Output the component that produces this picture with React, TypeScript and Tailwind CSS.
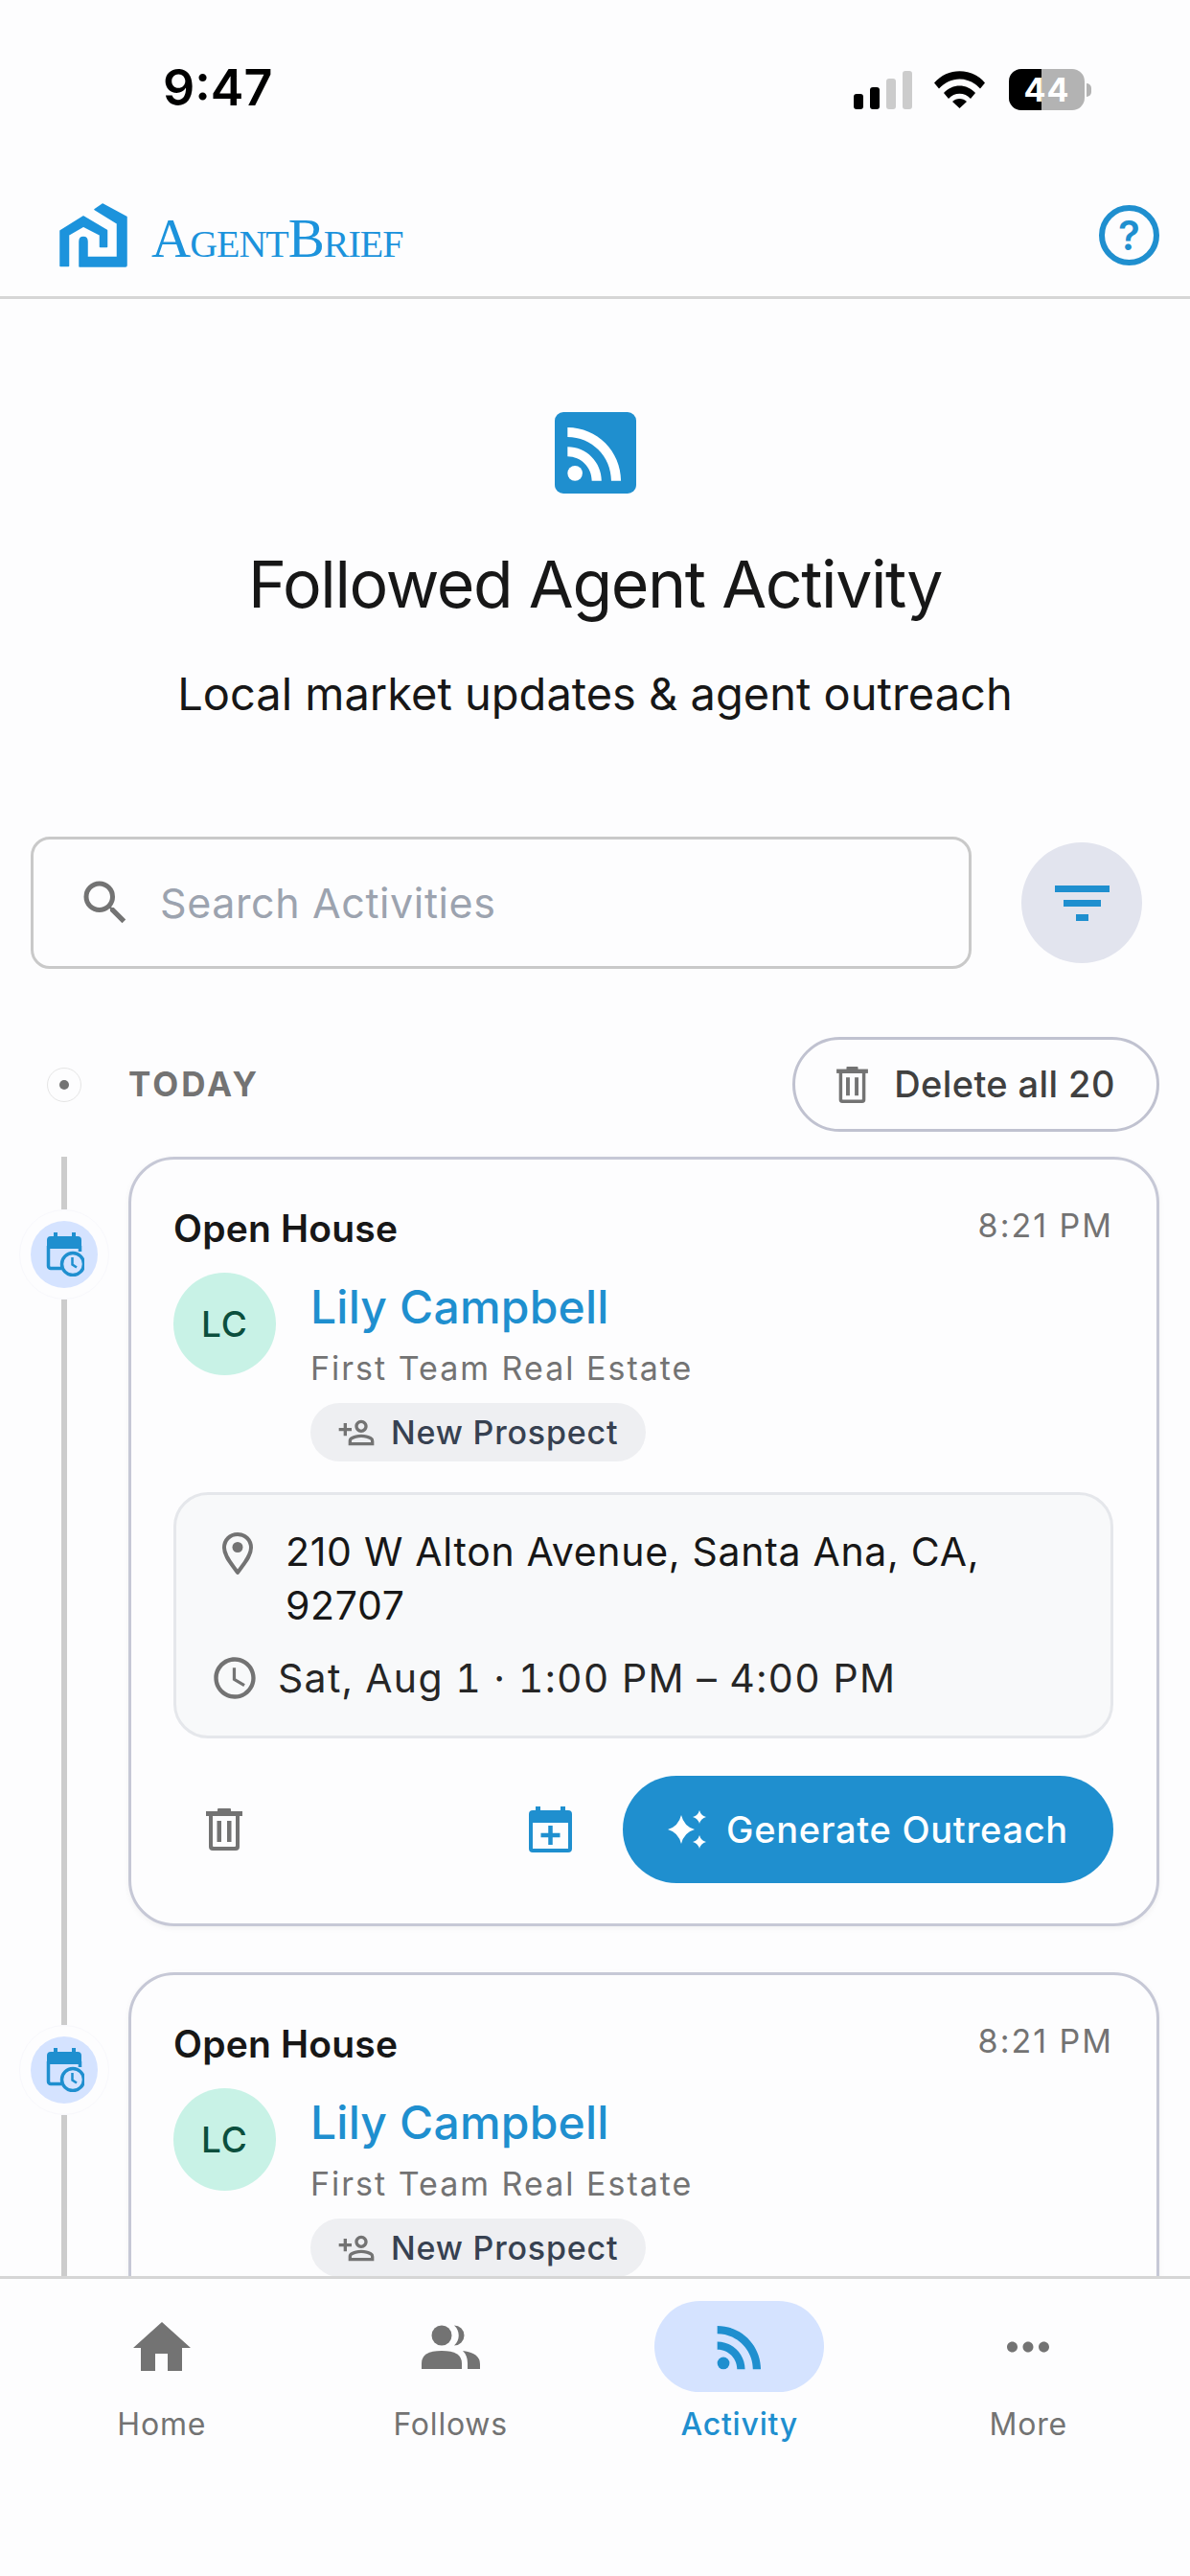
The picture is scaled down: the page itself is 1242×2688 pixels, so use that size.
import React from 'react';
import { MdMoreHoriz, MdRssFeed, MdSearch, MdOutlinePersonAddAlt, MdOutlineAccessTime } from 'react-icons/md';

function TrashIcon({ className }: { className?: string }) {
  return (
    <svg viewBox="0 0 38 44" className={className} fill="currentColor">
      <rect x="12" y="0" width="14" height="4" rx="1" />
      <rect x="0" y="3" width="38" height="5" />
      <path d="M3 7h32v33a4 4 0 0 1-4 4H7a4 4 0 0 1-4-4zm4 1v31a1 1 0 0 0 1 1h22a1 1 0 0 0 1-1V8z" fillRule="evenodd" />
      <rect x="11.500" y="13" width="4.500" height="22" />
      <rect x="22" y="13" width="4.500" height="22" />
    </svg>
  );
}

function CalendarClockIcon({ className }: { className?: string }) {
  return (
    <svg viewBox="0 0 40 46" className={className}>
      <path fill="currentColor" d="M8 0h4v4h15V0h4v4h2a4 4 0 0 1 4 4v9H1V8a4 4 0 0 1 4-4h3z" />
      <path fill="none" stroke="currentColor" strokeWidth="3.500" d="M2.500 14v21a2.500 2.500 0 0 0 2.500 2.500h11M35.500 14v6" />
      <circle cx="28" cy="33" r="11.500" fill="#d5e3ff" stroke="currentColor" strokeWidth="3.500" />
      <path fill="none" stroke="currentColor" strokeWidth="2.500" d="M27.500 26v7.500l4.500 3" />
    </svg>
  );
}

function CalendarPlusIcon({ className }: { className?: string }) {
  return (
    <svg viewBox="0 0 45 48" className={className}>
      <path fill="currentColor" d="M7 0h5v4h21V0h5v4h3a4 4 0 0 1 4 4v36a4 4 0 0 1-4 4H4a4 4 0 0 1-4-4V8a4 4 0 0 1 4-4h3z" />
      <rect x="4" y="17" width="37" height="27" fill="#fdfdfe" />
      <path fill="none" stroke="currentColor" strokeWidth="4.500" d="M22.500 20v20M12.500 30h20" />
    </svg>
  );
}

function SparkleIcon({ className }: { className?: string }) {
  return (
    <svg viewBox="0 0 40 40" className={className} fill="currentColor">
      <path d="M14 5Q17 17 28 20 17 23 14 35 11 23 0 20 11 17 14 5z" />
      <path d="M33 0Q34.500 5.500 40 7 34.500 8.500 33 14 31.500 8.500 26 7 31.500 5.500 33 0z" />
      <path d="M33 26Q34.500 31.500 40 33 34.500 34.500 33 40 31.500 34.500 26 33 31.500 31.500 33 26z" />
    </svg>
  );
}

function PinIcon({ className }: { className?: string }) {
  return (
    <svg viewBox="0 0 32 45" className={className}>
      <path fill="none" stroke="currentColor" strokeWidth="4" strokeLinejoin="round" d="M16 2C8 2 2 8 2 16c0 9 8 17 14 26 6-9 14-17 14-26 0-8-6-14-14-14z" />
      <circle cx="16" cy="15.500" r="5.500" fill="currentColor" />
    </svg>
  );
}

function HomeIcon({ className }: { className?: string }) {
  return (
    <svg viewBox="0 0 60 51" className={className} fill="currentColor">
      <path d="M30 0l30 27h-9v24H36V33H23v18H8V27H0z" />
    </svg>
  );
}

function FollowsIcon({ className }: { className?: string }) {
  return (
    <svg viewBox="0 0 61 46" className={className} fill="currentColor">
      <circle cx="21" cy="11" r="10.500" />
      <path d="M34 0.500A10.500 10.500 0 1 1 34 21.500 14 14 0 0 0 34 0.500z" />
      <path d="M0 46V40Q0 27 21 27 42 27 42 40V46z" />
      <path d="M43 27Q61 29 61 41V46H48V40Q48 32 43 27z" />
    </svg>
  );
}

function LogoMark() {
  return (
    <svg viewBox="0 0 71 67" className="h-[67px] w-[71px]">
      <g fill="#1c93dc" stroke="#1c93dc" strokeWidth="1.500" strokeLinejoin="round">
        <path d="M37 6.500L45 1 70 14.500V65Q70 66 69 66H21V40Q21 35.500 25 35.500 29 35.500 29 40V56.500H60.500V21z" />
        <path d="M1 29L25 14 49.500 28.500V45.500H42.500V33L25 24 9.500 33V65.500H1z" />
      </g>
    </svg>
  );
}

function StatusBar() {
  return (
    <div className="flex h-[186px] shrink-0 items-start justify-between pl-[170px] pr-[103px] pt-[62px]">
      <span className="text-[52px] font-semibold leading-[60px] text-black">9:47</span>
      <div className="mt-[10px] flex items-center">
        <svg viewBox="0 0 61 40" className="h-[40px] w-[61px]">
          <rect x="0" y="24" width="10" height="16" rx="3" fill="#000" />
          <rect x="17" y="17" width="10" height="23" rx="3" fill="#000" />
          <rect x="34" y="8" width="10" height="32" rx="3" fill="#cccccc" />
          <rect x="51" y="0" width="10" height="40" rx="3" fill="#cccccc" />
        </svg>
        <svg viewBox="0 0 53 39" className="ml-[23px] h-[39px] w-[53px]">
          <path d="M0 12.500C14-4 39-4 53 12.500l-5 6C36 5 17 5 5 18.500z" fill="#000" />
          <path d="M10 23c9-10 24-10 33 0l-5 6c-6-7-17-7-23 0z" fill="#000" />
          <path d="M19 32c4-4 11-4 15 0l-7.500 7z" fill="#000" />
        </svg>
        <div className="relative ml-[25px] h-[43px] w-[79px] overflow-hidden rounded-[13px] bg-[#b3b3b3]">
          <div className="h-full w-[34px] bg-black" />
          <span className="absolute inset-0 flex items-center justify-center text-[34px] font-bold leading-none tracking-[1px] text-white">44</span>
        </div>
        <div className="ml-[2px] h-[14px] w-[5px] rounded-r-full bg-[#b3b3b3]" />
      </div>
    </div>
  );
}

function AppHeader() {
  return (
    <div className="flex h-[126px] shrink-0 items-center justify-between border-b-[3px] border-[#d6d6d6] pb-[4px] pl-[62px] pr-[32px]">
      <div className="flex items-center gap-[25px]">
        <LogoMark />
        <span className="mt-[6px] text-[57px] leading-none tracking-[-1px] text-[#1c93dc] [font-family:'Liberation_Serif',serif] [font-variant:small-caps]">AgentBrief</span>
      </div>
      <div className="flex h-[63px] w-[63px] items-center justify-center rounded-full border-[6px] border-[#1f8fcf] text-[42px] font-semibold leading-none text-[#1f8fcf]">?</div>
    </div>
  );
}

// the second card runs under the tab bar, so only its top part is rendered
function ActivityCard({ cutOff = false }: { cutOff?: boolean }) {
  return (
    <div className="flex">
      <div className="flex w-[134px] shrink-0 flex-col items-center">
        <div className="h-[55px] w-[6px] bg-[#cccccc]" />
        <div className="flex h-[94px] w-[94px] shrink-0 items-center justify-center rounded-full border border-[#f8f8fc] bg-[#fdfdfe]">
          <div className="flex h-[70px] w-[70px] items-center justify-center rounded-full bg-[#d5e3ff] text-[#1f8fcf]">
            <CalendarClockIcon className="ml-[1px] h-[46px] w-[40px]" />
          </div>
        </div>
        <div className="w-[6px] flex-1 bg-[#cccccc]" />
      </div>
      <div className="mb-[48px] h-[803px] w-[1076px] rounded-[48px] border-[3px] border-[#c6c8d6] bg-[#fdfdfe] pl-[44px] pr-[45px] pt-[43px] shadow-[0_2px_6px_rgba(0,0,0,0.05)]">
        <div className="flex items-start justify-between">
          <span className="text-[39px] font-semibold leading-[58px] tracking-[0.200px] text-[#171717]">Open House</span>
          <span className="mt-[1px] text-[34px] leading-[50px] tracking-[2px] text-[#737373]">8:21 PM</span>
        </div>
        <div className="mt-[17px] flex gap-[36px]">
          <div className="flex h-[107px] w-[107px] shrink-0 items-center justify-center rounded-full bg-[#c8f2e6] text-[37px] font-medium leading-[44px] tracking-[1px] text-[#0b4f3d]">LC</div>
          <div className="flex flex-col items-start">
            <span className="text-[48px] font-medium leading-[72px] tracking-[0.200px] text-[#1f8fcf]">Lily Campbell</span>
            <span className="mt-[6px] text-[34px] leading-[44px] tracking-[2px] text-[#737373]">First Team Real Estate</span>
            <div className="mt-[14px] flex h-[61px] items-center gap-[16px] rounded-full bg-[#eeeff2] pl-[28px] pr-[29px]">
              <MdOutlinePersonAddAlt className="h-[40px] w-[40px] -scale-x-100 text-[#737373]" />
              <span className="text-[34px] font-medium leading-[44px] tracking-[0.800px] text-[#374151]">New Prospect</span>
            </div>
          </div>
        </div>
        {!cutOff && (
          <>
            <div className="mt-[32px] h-[257px] rounded-[36px] border-[3px] border-[#e5e7eb] bg-[#f8f9fa] pl-[40px] pr-[40px] pt-[31px]">
              <div className="flex gap-[34px]">
                <PinIcon className="ml-[8px] mt-[8px] h-[45px] w-[32px] shrink-0 text-[#737373]" />
                <span className="text-[41px] leading-[56px] tracking-[0.700px] text-[#171717]">210 W Alton Avenue, Santa Ana, CA, 92707</span>
              </div>
              <div className="mt-[20px] flex items-center gap-[19px]">
                <MdOutlineAccessTime className="-ml-[5px] h-[52px] w-[52px] shrink-0 text-[#737373]" />
                <span className="text-[41px] leading-[56px] tracking-[1.300px] tabular-nums text-[#262626]">Sat, Aug 1 · 1:00 PM – 4:00 PM</span>
              </div>
            </div>
            <div className="mt-[39px] flex items-center">
              <TrashIcon className="ml-[34px] h-[44px] w-[38px] text-[#737373]" />
              <CalendarPlusIcon className="ml-[299px] h-[48px] w-[45px] text-[#1f8fcf]" />
              <div className="ml-[53px] flex h-[112px] w-[512px] items-center justify-center gap-[21px] rounded-full bg-[#1f8fcf] text-white">
                <SparkleIcon className="h-[40px] w-[40px]" />
                <span className="text-[38px] font-medium leading-[48px] tracking-[0.700px]">Generate Outreach</span>
              </div>
            </div>
          </>
        )}
      </div>
    </div>
  );
}

const tabs = [
  { label: 'Home', icon: <HomeIcon className="h-[51px] w-[60px]" /> },
  { label: 'Follows', icon: <FollowsIcon className="h-[46px] w-[61px]" /> },
  { label: 'Activity', icon: <MdRssFeed className="h-[70px] w-[70px]" />, active: true },
  { label: 'More', icon: <MdMoreHoriz className="h-[66px] w-[66px]" /> },
];

function BottomNav() {
  return (
    <div className="grid h-[313px] shrink-0 grid-cols-4 border-t-[3px] border-[#d6d6d6] bg-[#fdfdfe] px-[18px] pt-[23px]">
      {tabs.map((tab) => (
        <div key={tab.label} className="flex flex-col items-center">
          <div className={`flex h-[95px] w-[177px] items-center justify-center rounded-full ${tab.active ? 'bg-[#d5e3ff] text-[#1f8fcf]' : 'text-[#737373]'}`}>
            {tab.icon}
          </div>
          <span className={`mt-[12px] text-[32px] leading-[44px] tracking-[0.800px] ${tab.active ? 'font-medium text-[#1f8fcf]' : 'text-[#737373]'}`}>{tab.label}</span>
        </div>
      ))}
    </div>
  );
}

export default function App() {
  return (
    <div className="flex h-[2688px] w-[1242px] flex-col overflow-hidden bg-[#fdfdfe] [font-family:Inter,'Liberation_Sans',sans-serif]">
      <StatusBar />
      <AppHeader />
      <div className="min-h-0 flex-1 overflow-hidden">
        <div className="flex flex-col items-center pt-[118px]">
          <div className="flex h-[85px] w-[85px] items-center justify-center rounded-[9px] bg-[#1f8fcf] text-white">
            <MdRssFeed className="h-[86px] w-[86px] shrink-0" />
          </div>
          <h1 className="mt-[54px] text-[68px] font-normal leading-[80px] tracking-[-1.400px] text-[#171717]">Followed Agent Activity</h1>
          <p className="mt-[45px] text-[47px] leading-[60px] text-[#171717]">Local market updates &amp; agent outreach</p>
        </div>
        <div className="mt-[119px] flex items-center pl-[32px] pr-[50px]">
          <div className="flex h-[138px] w-[982px] items-center rounded-[20px] border-[3px] border-[#c9c9c9] bg-[#fdfdfe] pl-[45px]">
            <MdSearch className="h-[60px] w-[60px] text-[#737373]" />
            <span className="ml-[27px] text-[43px] tracking-[0.600px] text-[#9ca3af]">Search Activities</span>
          </div>
          <div className="ml-[52px] flex h-[126px] w-[126px] items-center justify-center rounded-full bg-[#e2e4ee]">
            <svg viewBox="0 0 57 37" className="h-[37px] w-[57px]" fill="#1f8fcf">
              <rect x="0" y="0" width="57" height="7" />
              <rect x="9" y="15" width="39" height="7" />
              <rect x="22" y="30" width="13" height="7" />
            </svg>
          </div>
        </div>
        <div className="mt-[71px] flex h-[99px] items-center pr-[32px]">
          <div className="flex w-[134px] shrink-0 justify-center">
            <div className="flex h-[36px] w-[36px] items-center justify-center rounded-full border border-[#e5e5e5]">
              <div className="h-[10px] w-[10px] rounded-full bg-[#737373]" />
            </div>
          </div>
          <span className="text-[35px] font-bold tracking-[3px] text-[#737373]">TODAY</span>
          <div className="ml-auto flex h-[99px] w-[383px] items-center justify-center gap-[27px] rounded-full border-[3px] border-[#c0c2d0] text-[#404040]">
            <TrashIcon className="h-[38px] w-[33px] text-[#737373]" />
            <span className="text-[38px] font-medium tracking-[0.400px]">Delete all 20</span>
          </div>
        </div>
        <div className="mt-[26px]">
          <ActivityCard />
          <ActivityCard cutOff />
        </div>
      </div>
      <BottomNav />
    </div>
  );
}
